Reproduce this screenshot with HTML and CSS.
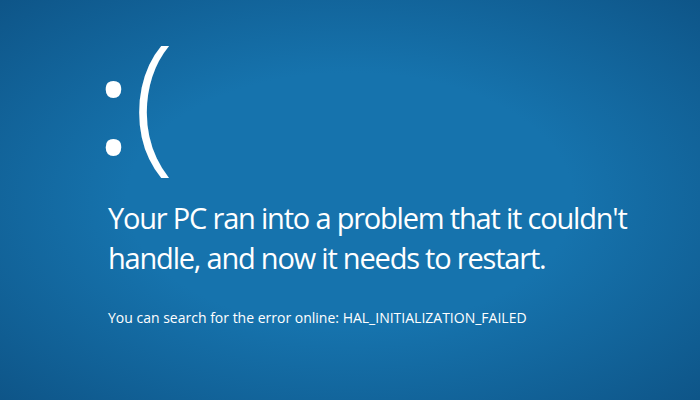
FILE: index.html
```html
<!DOCTYPE html>
<html>
<head>
    <title>Your PC ran into a problem</title>
    <link rel="stylesheet" href="styles.css">
</head>
<body>
    <div class="screen">
        <div class="frown"><span class="colon">:</span><span class="paren">(</span></div>
        <p class="message">Your PC ran into a problem that it couldn't<br>handle, and now it needs to restart.</p>
        <p class="details">You can search for the error online: HAL_INITIALIZATION_FAILED</p>
    </div>
</body>
</html>
```

FILE: styles.css
```css
body {
    margin: 0;
    padding: 0;
    font-family: "Open Sans", "Noto Sans", sans-serif;
    color: #ffffff;
}

.screen {
    width: 700px;
    height: 400px;
    box-sizing: border-box;
    padding: 9px 0 0 108px;
    display: flex;
    flex-direction: column;
    background: radial-gradient(ellipse at center, #1673ad 45%, #0e5588 100%);
}

.frown {
    margin-left: -12px;
}

.colon {
    font-size: 133px;
}

.paren {
    font-size: 151px;
    line-height: 1.15;
    font-weight: 300;
    margin-left: 2px;
}

.message {
    margin: 5px 0 0;
    font-size: 29px;
    line-height: 40px;
    letter-spacing: -1.2px;
}

.details {
    margin: 30px 0 0;
    font-size: 14px;
    line-height: 20px;
}
```
